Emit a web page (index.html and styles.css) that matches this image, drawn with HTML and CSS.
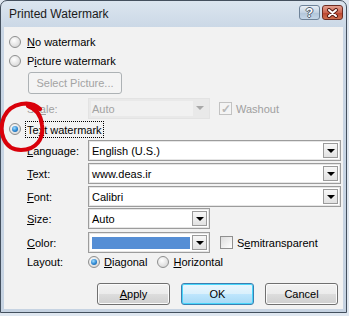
FILE: index.html
```html
<!DOCTYPE html>
<html lang="en">
<head>
    <meta charset="UTF-8">
    <title>Printed Watermark</title>
    <link rel="stylesheet" href="styles.css">
</head>
<body>
    <div class="window">
        <div class="titlebar">
            <span class="title">Printed Watermark</span>
            <div class="caption-btns">
                <span class="cap-btn help">?</span>
                <span class="cap-btn close">
                    <svg width="13" height="10" viewBox="0 0 13 10">
                        <path d="M3 2 L10 8 M10 2 L3 8" stroke="#5a1d14" stroke-width="4" stroke-linecap="round"/>
                        <path d="M3 2 L10 8 M10 2 L3 8" stroke="#ffffff" stroke-width="2" stroke-linecap="round"/>
                    </svg>
                </span>
            </div>
        </div>

        <div class="client">
            <div class="opt">
                <span class="radio"></span>
                <span><u>N</u>o watermark</span>
            </div>
            <div class="opt opt-pic">
                <span class="radio"></span>
                <span>P<u>i</u>cture watermark</span>
            </div>
            <div class="row-btn">
                <span class="btn disabled">Select Picture...</span>
            </div>
            <div class="field field-scale">
                <span class="label disabled-text">Sc<u>a</u>le:</span>
                <div class="combo combo-short combo-off">
                    <span class="combo-text">Auto</span>
                    <span class="arrow-off"></span>
                </div>
                <span class="check check-off">&#10003;</span>
                <span class="disabled-text">Washout</span>
            </div>
            <div class="opt opt-text">
                <span class="radio on"></span>
                <span class="focus">Te<u>x</u>t watermark</span>
            </div>
            <div class="field field-lang">
                <span class="label"><u>L</u>anguage:</span>
                <div class="combo">
                    <span class="combo-text">English (U.S.)</span>
                    <span class="arrow"></span>
                </div>
            </div>
            <div class="field field-mid">
                <span class="label"><u>T</u>ext:</span>
                <div class="combo">
                    <span class="combo-text">www.deas.ir</span>
                    <span class="arrow"></span>
                </div>
            </div>
            <div class="field field-mid">
                <span class="label"><u>F</u>ont:</span>
                <div class="combo">
                    <span class="combo-text">Calibri</span>
                    <span class="arrow"></span>
                </div>
            </div>
            <div class="field field-size">
                <span class="label"><u>S</u>ize:</span>
                <div class="combo combo-short">
                    <span class="combo-text">Auto</span>
                    <span class="arrow"></span>
                </div>
            </div>
            <div class="field field-color">
                <span class="label"><u>C</u>olor:</span>
                <div class="combo combo-short">
                    <span class="swatch"></span>
                    <span class="arrow"></span>
                </div>
                <span class="check"></span>
                <span>S<u>e</u>mitransparent</span>
            </div>
            <div class="field field-layout">
                <span class="label">Layout:</span>
                <span class="radio on"></span>
                <span class="radio-text"><u>D</u>iagonal</span>
                <span class="radio radio-h"></span>
                <span class="radio-text"><u>H</u>orizontal</span>
            </div>
            <div class="buttons">
                <span class="btn"><u>A</u>pply</span>
                <span class="btn default">OK</span>
                <span class="btn">Cancel</span>
            </div>
        </div>

        <svg class="scribble" width="60" height="70" viewBox="0 0 60 70">
            <path d="M40 8 C31 -1, 11 1, 4 16 C-2 31, 4 49, 21 49 C36 49, 44 38, 42 24 C41 14, 37 8, 28 5"
                  fill="none" stroke="#d9000a" stroke-width="4" stroke-linecap="round"/>
        </svg>
    </div>
</body>
</html>
```

FILE: styles.css
```css
body {
    margin: 0;
    background-color: #dfe7f0;
    font-family: "Liberation Sans", Arial, sans-serif;
    font-size: 11px;
    color: #000000;
}

.window {
    position: relative;
    width: 347px;
    height: 313px;
    box-sizing: border-box;
    border: 1px solid #44505e;
    border-radius: 7px 7px 0 0;
    padding: 0 3px 3px 3px;
    background: linear-gradient(#dbe5ef, #c9d6e5 30px, #c6d3e2);
}

.titlebar {
    height: 26px;
    display: flex;
    align-items: center;
    justify-content: space-between;
    padding-left: 5px;
}

.title {
    font-size: 12px;
    color: #1a1a1a;
    margin-top: -1px;
}

.caption-btns {
    display: flex;
    gap: 2px;
    margin-top: -3px;
}

.cap-btn {
    width: 21px;
    height: 15px;
    box-sizing: border-box;
    border-radius: 3px;
    display: flex;
    align-items: center;
    justify-content: center;
}

.help {
    border: 1px solid #6f8399;
    background: linear-gradient(#e8eff6, #c3d2e2 50%, #b1c4d8 51%, #c4d6e8);
    color: #ffffff;
    font-weight: bold;
    font-size: 12px;
    text-shadow: -1px 0 #4c5b6c, 1px 0 #4c5b6c, 0 -1px #4c5b6c, 0 1px #4c5b6c;
}

.close {
    border: 1px solid #6e2c22;
    background: linear-gradient(#e3a090, #cc6550 50%, #b9432e 51%, #d0704f);
}

.client {
    background-color: #f2f2f2;
    height: 282px;
    box-sizing: border-box;
    padding: 8px 0 0 5px;
}

.opt {
    display: flex;
    align-items: center;
    height: 14px;
    gap: 6px;
}

.opt-pic {
    margin-top: 5px;
}

.opt-text {
    margin-top: 1px;
    height: 18px;
}

.radio {
    position: relative;
    width: 12px;
    height: 12px;
    box-sizing: border-box;
    border-radius: 50%;
    border: 1px solid #8e8f8f;
    background: radial-gradient(circle at 40% 35%, #ffffff, #e2e2e2 60%, #c9c9c9);
    flex: none;
}

.radio.on::after {
    content: "";
    position: absolute;
    left: 2px;
    top: 2px;
    width: 6px;
    height: 6px;
    border-radius: 50%;
    background: radial-gradient(circle at 40% 35%, #9fdcff, #2b86d1 55%, #0d4f94);
}

.focus {
    border: 1px dotted #000000;
    padding: 2px 1px 1px 1px;
    margin-left: -2px;
}

.row-btn {
    margin-top: 4px;
    padding-left: 19px;
    height: 22px;
}

.row-btn .btn {
    width: 94px;
}

.btn {
    display: flex;
    align-items: center;
    justify-content: center;
    width: 73px;
    height: 22px;
    box-sizing: border-box;
    border: 1px solid #707070;
    border-radius: 3px;
    background: linear-gradient(#f2f2f2, #ebebeb 50%, #dddddd 51%, #cfcfcf);
    box-shadow: inset 0 0 0 1px #fbfbfb;
}

.btn.disabled {
    color: #a3a3a3;
    border-color: #adb2b5;
    background: #f4f4f4;
    box-shadow: none;
}

.btn.default {
    border-color: #3c7fb1;
    background: linear-gradient(#eaf6fd, #d9f0fc 50%, #bee6fd 51%, #a7d9f5);
    box-shadow: inset 0 0 0 1px #48d6fb;
}

.field {
    display: flex;
    align-items: center;
    height: 21px;
    padding-left: 18px;
}

.field-scale {
    margin-top: 4px;
}

.field-lang {
    margin-top: 2px;
}

.field-mid {
    margin-top: 2px;
}

.field-size {
    margin-top: 1px;
}

.field-color {
    margin-top: 3px;
}

.field-layout {
    height: 14px;
    margin-top: 2px;
}

.label {
    width: 61px;
    flex: none;
}

.disabled-text {
    color: #a0a0a0;
}

.combo {
    position: relative;
    width: 253px;
    height: 21px;
    box-sizing: border-box;
    border: 1px solid #9c9c9c;
    box-shadow: inset 0 0 0 1px #e6e6e6;
    background-color: #ffffff;
    display: flex;
    align-items: center;
}

.combo-short {
    width: 122px;
}

.combo-text {
    padding-left: 3px;
}

.combo-off {
    border-color: #e3e3e3;
    box-shadow: none;
    background-color: #e9e9e9;
    color: #a3a3a3;
}

.combo-off .combo-text {
    align-self: stretch;
    display: flex;
    align-items: center;
    width: 101px;
    margin: 2px 0 2px 2px;
    padding-left: 1px;
    background-color: #f1f1f1;
}

.arrow {
    position: absolute;
    right: 2px;
    top: 2px;
    width: 15px;
    height: 15px;
    box-sizing: border-box;
    border: 1px solid #9b9b9b;
    background: linear-gradient(#f7f7f7, #e2e2e2);
}

.arrow::after,
.arrow-off::after {
    content: "";
    position: absolute;
    left: 3px;
    top: 5px;
    border-left: 4px solid transparent;
    border-right: 4px solid transparent;
    border-top: 4px solid #000000;
}

.arrow-off {
    position: absolute;
    right: 2px;
    top: 2px;
    width: 15px;
    height: 15px;
}

.arrow-off::after {
    left: 4px;
    border-top-color: #a8a8a8;
}

.swatch {
    width: 98px;
    height: 12px;
    margin-left: 3px;
    background-color: #558ed5;
}

.check {
    width: 13px;
    height: 13px;
    box-sizing: border-box;
    border: 1px solid #8f8f8f;
    background: linear-gradient(135deg, #dcdcdc, #ffffff);
    margin: 0 4px 0 10px;
    flex: none;
}

.check-off {
    border-color: #c2c2c2;
    background: #f4f4f4;
    color: #b8b8b8;
    font-size: 12px;
    line-height: 12px;
    text-align: center;
    font-weight: bold;
    margin-left: 9px;
}

.radio-text {
    margin-left: 4px;
}

.radio-h {
    margin-left: 10px;
}

.buttons {
    display: flex;
    gap: 11px;
    margin-top: 14px;
    padding-left: 88px;
}

.scribble {
    position: absolute;
    left: -1px;
    top: 100px;
    pointer-events: none;
}
```
